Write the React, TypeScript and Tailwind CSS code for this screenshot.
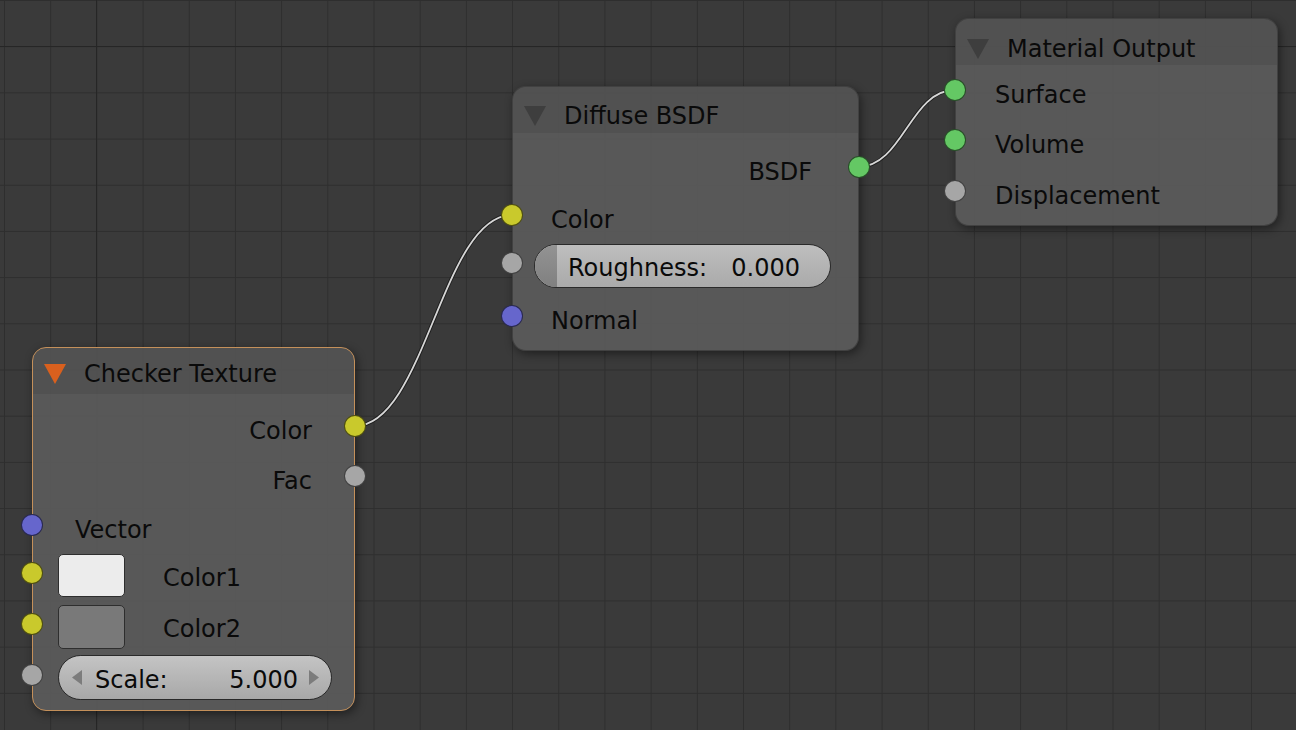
import type { ReactNode } from 'react';

type SocketKind = 'color' | 'float' | 'vector' | 'shader';

const socketFill: Record<SocketKind, string> = {
  color: 'bg-[#c9c92c]',
  float: 'bg-[#a6a6a6]',
  vector: 'bg-[#6666cc]',
  shader: 'bg-[#64c864]',
};

function Socket({ kind, side }: { kind: SocketKind; side: 'in' | 'out' }) {
  return (
    <span
      className={`absolute top-[calc(50%-14px)] size-[22px] rounded-full border border-black/60 ${socketFill[kind]} ${
        side === 'in' ? '-left-[12px]' : '-right-[12px]'
      }`}
    />
  );
}

function Row({ className, children }: { className: string; children: ReactNode }) {
  return <div className={`relative flex items-center ${className}`}>{children}</div>;
}

// labels sit a couple of px under the socket centre
function Label({ children }: { children: ReactNode }) {
  return <span className="relative pt-[4px]">{children}</span>;
}

interface NodeProps {
  title: string;
  active?: boolean;
  headerPad: string;
  className: string;
  children: ReactNode;
}

function Node({ title, active = false, headerPad, className, children }: NodeProps) {
  return (
    <div
      className={`absolute rounded-[14px] border bg-[#5a5a5a]/95 shadow-[2px_3px_10px_rgba(0,0,0,0.45)] ${
        active ? 'border-[#c4905a]' : 'border-black/25'
      } ${className}`}
    >
      <div className={`flex h-[46px] items-center gap-[18px] rounded-t-[13px] bg-black/[0.07] pl-[11px] ${headerPad}`}>
        <svg width="22" height="20" viewBox="0 0 22 20" className="shrink-0">
          <polygon points="0,0 22,0 11,20" fill={active ? '#d9601e' : '#3e3e3e'} />
        </svg>
        <span>{title}</span>
      </div>
      {children}
    </div>
  );
}

function Link({ d }: { d: string }) {
  return (
    <>
      <path d={d} fill="none" stroke="#111" strokeOpacity="0.7" strokeWidth="3.6" />
      <path d={d} fill="none" stroke="#d6d6d6" strokeWidth="1.8" />
    </>
  );
}

export default function App() {
  return (
    <div className="relative h-[730px] w-[1296px] overflow-hidden bg-[#3a3a3a] bg-[linear-gradient(to_right,#2e2e2e_1px,transparent_1px),linear-gradient(to_bottom,#2e2e2e_1px,transparent_1px)] bg-size-[46.2px_46.2px] bg-position-[4px_0px] font-['DejaVu_Sans',sans-serif] text-[24px] text-[#0a0a0a]">
      <div className="absolute inset-y-0 left-[96px] w-px bg-[#262626]" />
      <div className="absolute inset-x-0 top-[46px] h-px bg-[#262626]" />

      <svg className="absolute inset-0" width="1296" height="730">
        <Link d="M355 426 C425 426 442 215 512 215" />
        <Link d="M858 167 C903 167 910 90 955 90" />
      </svg>

      {/* Diffuse BSDF */}
      <Node title="Diffuse BSDF" headerPad="pt-[11px]" className="left-[512px] top-[86px] h-[265px] w-[347px]">
        <div className="pt-[13px]">
          <Row className="h-[48px] justify-end pr-[46px]">
            <Label>BSDF</Label>
            <Socket kind="shader" side="out" />
          </Row>
          <Row className="h-[48px] pl-[38px]">
            <Socket kind="color" side="in" />
            <Label>Color</Label>
          </Row>
          <Row className="h-[48px] pl-[21px] pr-[27px]">
            <Socket kind="float" side="in" />
            <div className="relative flex h-[44px] flex-1 items-center justify-between overflow-hidden rounded-full border border-[#2a2a2a] bg-[linear-gradient(#bebebe,#aaaaaa)] pl-[33px] pr-[30px]">
              <span className="absolute inset-y-0 left-0 w-[22px] bg-[linear-gradient(#939393,#808080)]" />
              <Label>Roughness:</Label>
              <Label>0.000</Label>
            </div>
          </Row>
          <Row className="h-[58px] pl-[38px]">
            <Socket kind="vector" side="in" />
            <Label>Normal</Label>
          </Row>
        </div>
      </Node>

      {/* Material Output */}
      <Node title="Material Output" headerPad="pt-[13px]" className="left-[955px] top-[18px] h-[208px] w-[323px]">
        <div className="pt-[4px]">
          <Row className="h-[48px] pl-[39px]">
            <Socket kind="shader" side="in" />
            <Label>Surface</Label>
          </Row>
          <Row className="h-[52px] pl-[39px]">
            <Socket kind="shader" side="in" />
            <Label>Volume</Label>
          </Row>
          <Row className="h-[50px] pl-[39px]">
            <Socket kind="float" side="in" />
            <Label>Displacement</Label>
          </Row>
        </div>
      </Node>

      {/* Checker Texture */}
      <Node title="Checker Texture" active headerPad="pt-[5px]" className="left-[32px] top-[347px] h-[364px] w-[323px]">
        <div className="pt-[11px]">
          <Row className="h-[48px] justify-end pr-[42px]">
            <Label>Color</Label>
            <Socket kind="color" side="out" />
          </Row>
          <Row className="h-[52px] justify-end pr-[42px]">
            <Label>Fac</Label>
            <Socket kind="float" side="out" />
          </Row>
          <Row className="h-[45px] pl-[42px]">
            <Socket kind="vector" side="in" />
            <Label>Vector</Label>
          </Row>
          <Row className="h-[51px] gap-[38px] pl-[25px]">
            <Socket kind="color" side="in" />
            <span className="h-[43px] w-[67px] rounded-[5px] border border-[#2e2e2e] bg-[#ececec]" />
            <Label>Color1</Label>
          </Row>
          <Row className="h-[51px] gap-[38px] pl-[25px]">
            <Socket kind="color" side="in" />
            <span className="h-[44px] w-[67px] rounded-[5px] border border-[#2e2e2e] bg-[#797979]" />
            <Label>Color2</Label>
          </Row>
          <Row className="h-[51px] pl-[25px] pr-[22px]">
            <Socket kind="float" side="in" />
            <div className="relative flex h-[45px] flex-1 items-center justify-between rounded-full border border-[#2a2a2a] bg-[linear-gradient(#c4c4c4,#a8a8a8)] pl-[36px] pr-[33px]">
              <svg className="absolute left-[13px] top-[14px]" width="10" height="15" viewBox="0 0 10 15">
                <polygon points="10,0 10,15 0,7.5" fill="#7c7c7c" />
              </svg>
              <Label>Scale:</Label>
              <Label>5.000</Label>
              <svg className="absolute right-[12px] top-[14px]" width="10" height="15" viewBox="0 0 10 15">
                <polygon points="0,0 0,15 10,7.5" fill="#7c7c7c" />
              </svg>
            </div>
          </Row>
        </div>
      </Node>
    </div>
  );
}
